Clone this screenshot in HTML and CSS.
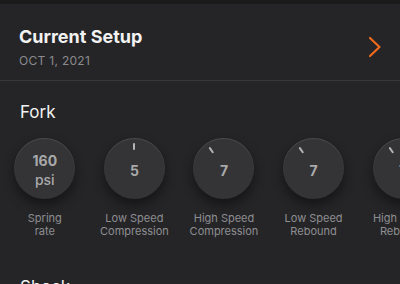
FILE: index.html
```html
<!DOCTYPE html>
<html lang="en">
<head>
  <meta charset="UTF-8">
  <meta name="viewport" content="width=device-width, initial-scale=1.0">
  <title>Current Setup</title>
  <link rel="stylesheet" href="styles.css">
</head>
<body>
  <div class="topbar"></div>

  <header class="setup">
    <div>
      <div class="setup-title">Current Setup</div>
      <div class="setup-date">OCT 1, 2021</div>
    </div>
    <svg class="chevron" width="14" height="22" viewBox="0 0 14 22">
      <path d="M2 2 L11.5 11 L2 20" fill="none" stroke="#f0691c" stroke-width="2.2" stroke-linecap="round" stroke-linejoin="round"/>
    </svg>
  </header>

  <section class="group">
    <h2>Fork</h2>
    <div class="knobs">
      <div class="item">
        <div class="knob">
          <div class="value"><b>160</b><span>psi</span></div>
        </div>
        <div class="label">Spring<br>rate</div>
      </div>
      <div class="item">
        <div class="knob">
          <div class="dial"><i></i></div>
          <div class="value single">5</div>
        </div>
        <div class="label">Low Speed<br>Compression</div>
      </div>
      <div class="item">
        <div class="knob">
          <div class="dial left"><i></i></div>
          <div class="value single">7</div>
        </div>
        <div class="label">High Speed<br>Compression</div>
      </div>
      <div class="item">
        <div class="knob">
          <div class="dial left"><i></i></div>
          <div class="value single">7</div>
        </div>
        <div class="label">Low Speed<br>Rebound</div>
      </div>
      <div class="item">
        <div class="knob">
          <div class="dial left"><i></i></div>
          <div class="value single">7</div>
        </div>
        <div class="label">High Speed<br>Rebound</div>
      </div>
    </div>
  </section>

  <section class="group">
    <h2 class="shock">Shock</h2>
  </section>
</body>
</html>
```

FILE: styles.css
```css
body {
  margin: 0;
  height: 284px;
  overflow: hidden;
  background: #252527;
  color: #f2f2f2;
  font-family: "Inter", "Liberation Sans", sans-serif;
}

.topbar {
  height: 4px;
  background: #1b1b1b;
}

.setup {
  height: 53px;
  display: flex;
  justify-content: space-between;
  align-items: flex-start;
  padding: 23px 18px 0 19px;
  border-bottom: 1px solid #38383a;
}

.setup-title {
  font-size: 18px;
  font-weight: 700;
  line-height: 20px;
}

.setup-date {
  font-size: 12px;
  line-height: 14px;
  color: #8a8a8e;
  letter-spacing: 0.3px;
  margin-top: 7px;
}

.chevron {
  margin-top: 9px;
}

.group h2 {
  margin: 0;
  padding: 20px 20px 0;
  font-size: 17px;
  font-weight: 400;
  line-height: 22px;
}

.knobs {
  display: flex;
  margin-top: 15px;
}

.item {
  flex: 0 0 89.6px;
  display: flex;
  flex-direction: column;
  align-items: center;
}

.knob {
  position: relative;
  width: 61px;
  height: 61px;
  border-radius: 50%;
  background: #343436;
  box-shadow: 0 6px 12px rgba(0, 0, 0, 0.45), inset 0 1px 1px rgba(255, 255, 255, 0.12);
  display: flex;
  justify-content: center;
  align-items: center;
}

.dial {
  position: absolute;
  inset: 0;
  display: flex;
  justify-content: center;
}

.dial.left {
  transform: rotate(-35deg);
}

.dial i {
  width: 2px;
  height: 7px;
  margin-top: 5px;
  border-radius: 1px;
  background: #b4b4b6;
}

.value {
  display: flex;
  flex-direction: column;
  align-items: center;
  color: #a9a9ab;
  font-size: 14px;
  line-height: 18px;
  margin-top: 3px;
}

.value b {
  font-size: 14px;
}

.value span {
  font-size: 14px;
  font-weight: 500;
  margin-top: 1px;
}

.value.single {
  font-weight: 700;
  margin-top: 4px;
}

.label {
  margin-top: 13px;
  font-size: 11px;
  line-height: 13px;
  color: #8e8e92;
  text-align: center;
  white-space: nowrap;
}

.group h2.shock {
  padding-top: 38px;
}
```
